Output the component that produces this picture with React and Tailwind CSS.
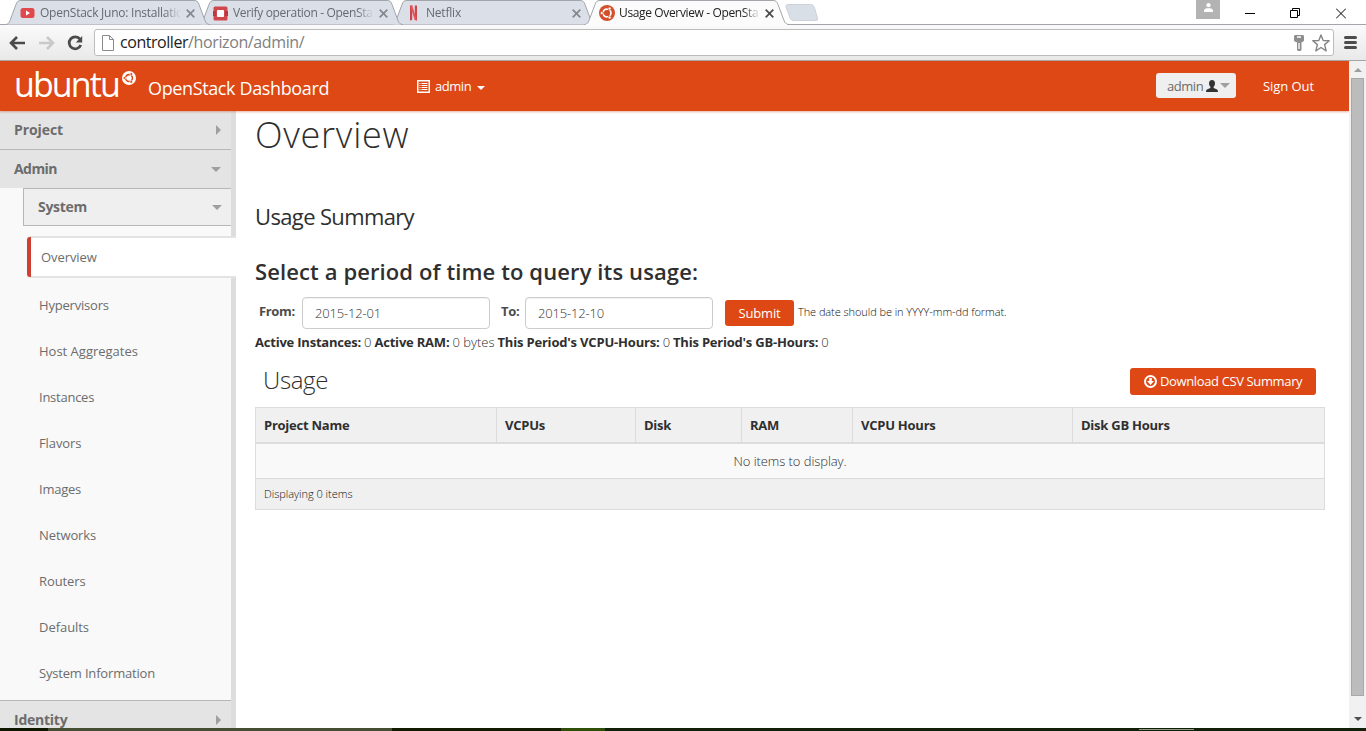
const tabShape = 'M2.5 24.5 C5 24.5 6 23 7 20.5 L13 4.5 C14 1.8 15 0.5 18 0.5 L191 0.5 C194 0.5 195 1.8 196 4.5 L202 20.5 C203 23 204 24.5 207 24.5';

function CloseX({ active }) {
  return (
    <svg className="h-[9px] w-[9px] shrink-0" viewBox="0 0 9 9" stroke={active ? '#4a4a4a' : '#85888c'} strokeWidth="1.7">
      <path d="M0.7 0.7 8.3 8.3M8.3 0.7 0.7 8.3" />
    </svg>
  );
}

function Tab({ icon, active, layer, track, children }) {
  return (
    <div className={`relative -mr-[16px] h-[25px] w-[209px] shrink-0 ${layer}`}>
      <svg className="absolute inset-0 h-[25px] w-[209px]" viewBox="0 0 209 25">
        <path d={tabShape} fill={active ? '#fbfbfb' : '#dbe0e8'} stroke="#a2a5aa" />
        {active && <path d="M4 24.5H205" stroke="#fbfbfb" />}
      </svg>
      <div className="relative flex h-full items-center pl-[16px] pt-px">
        <div className="flex w-[16px] justify-center">{icon}</div>
        <div className={`ml-[5px] w-[141px] overflow-hidden whitespace-nowrap text-[12px] leading-[18px] ${track} ${active ? 'text-[#222]' : 'text-[#666a6f]'} [mask-image:linear-gradient(to_right,black_88%,transparent)]`}>
          {children}
        </div>
        <div className="ml-[5px]"><CloseX active={active} /></div>
      </div>
    </div>
  );
}

function Youtube() {
  return (
    <svg className="h-[16px] w-[15px]" viewBox="0 0 15 16">
      <rect x="0.5" y="3" width="14" height="10" rx="2.5" fill="#e04a4c" />
      <path d="M6 5.5v5l4-2.5z" fill="#fff" />
    </svg>
  );
}

function OpenstackIcon() {
  return (
    <svg className="h-[15px] w-[15px]" viewBox="0 0 15 15">
      <rect x="0.5" y="0.5" width="14" height="14" rx="1.5" fill="#d0484c" />
      <rect x="0" y="5" width="3" height="5" fill="#b83a3f" />
      <rect x="12" y="5" width="3" height="5" fill="#b83a3f" />
      <rect x="4" y="4" width="7" height="7" rx="0.8" fill="#fff" />
    </svg>
  );
}

function NetflixIcon() {
  return (
    <svg className="h-[16px] w-[9px]" viewBox="0 0 9 16">
      <path d="M1 0.5h2.2v14.6L1 15.5z M5.8 0.5H8v15l-2.2-0.4z" fill="#c9484c" />
      <path d="M1 0.5h2.3L8 15.5l-2.3-0.4z" fill="#e8555a" />
    </svg>
  );
}

function Circle({ bg, fg, size }) {
  return (
    <svg className={size} viewBox="0 0 32 32">
      <circle cx="16" cy="16" r="16" fill={bg} />
      <circle cx="16" cy="16" r="7.8" fill="none" stroke={fg} strokeWidth="3.6" />
      <g stroke={bg} strokeWidth="1.6">
        <path d="M16 16H4M16 16l6 10.4M16 16l6-10.4" />
      </g>
      <circle cx="16" cy="16" r="5.4" fill={bg} />
      <g fill={fg} stroke={bg} strokeWidth="1.4">
        <circle cx="5.6" cy="16" r="3.1" />
        <circle cx="21.2" cy="7" r="3.1" />
        <circle cx="21.2" cy="25" r="3.1" />
      </g>
    </svg>
  );
}

function Browser() {
  return (
    <>
      <div className="flex h-[25px] items-start bg-white shadow-[inset_0_-1px_0_#a2a5aa]">
        <div className="flex pl-[3px]">
          <Tab layer="z-[4]" icon={<Youtube />} track="tracking-[-0.24px]">OpenStack Juno: Installatic</Tab>
          <Tab layer="z-[3]" icon={<OpenstackIcon />} track="tracking-[-0.33px]">Verify operation - OpenSta</Tab>
          <Tab layer="z-[2]" icon={<NetflixIcon />} track="tracking-[-0.2px]">Netflix</Tab>
          <Tab active layer="z-[5]" icon={<Circle bg="#d3502a" fg="#fff" size="ml-px h-[16px] w-[16px] shrink-0" />} track="tracking-[-0.36px]">Usage Overview - OpenSta</Tab>
        </div>
        <svg className="ml-[10px] mt-[4px] h-[18px] w-[34px]" viewBox="0 0 34 18">
          <path d="M3 0.5H25.5C28 0.5 28.5 1.5 29.5 4L32.3 13.5C33 16 32.2 16.5 30.5 16.5H9C6.5 16.5 5.5 15.5 4.7 13L1.2 3.5C0.5 1.5 1.2 0.5 3 0.5Z" fill="#d9dfe7" stroke="#cdd2d9" />
        </svg>
        <div className="ml-auto flex h-full items-start">
          <div className="flex h-[19px] w-[24px] justify-center bg-[#b3b3b3] pt-[3px]">
            <svg className="h-[9px] w-[9px]" viewBox="0 0 9 9" fill="#fff"><circle cx="4.5" cy="2.2" r="2.1" /><path d="M0 9V7.6C0 5.8 2 5.2 4.5 5.2S9 5.8 9 7.6V9z" /></svg>
          </div>
          <svg className="ml-[25px] mt-[8px] h-[11px] w-[10px]" viewBox="0 0 10 11"><path d="M0 5.5H10" stroke="#000" /></svg>
          <svg className="ml-[35px] mt-[8px] h-[11px] w-[10px]" viewBox="0 0 10 11" fill="none" stroke="#000"><path d="M0.5 2.5H7.5V9.5H0.5ZM2.5 2.5V0.5H9.5V7.5H7.5" /></svg>
          <svg className="ml-[36px] mr-[20px] mt-[8px] h-[11px] w-[10px]" viewBox="0 0 10 11" stroke="#000"><path d="M0 0.5 10 10.5M10 0.5 0 10.5" /></svg>
        </div>
      </div>
      <div className="flex h-[36px] items-center border-b border-[#a5a5a5] bg-gradient-to-b from-[#fafafa] to-[#e9e9e9] pl-[9px]">
        <svg className="h-[14px] w-[16px]" viewBox="0 0 16 14" fill="none" stroke="#4b4b4b" strokeWidth="2.6"><path d="M16 7H2.5M8 1 2 7l6 6" /></svg>
        <svg className="ml-[14px] h-[14px] w-[16px]" viewBox="0 0 16 14" fill="none" stroke="#c9c9c9" strokeWidth="2.6"><path d="M0 7H13.5M8 1l6 6-6 6" /></svg>
        <svg className="ml-[12px] h-[16px] w-[16px]" viewBox="0 0 16 16" fill="none"><path d="M13 4.2A6 6 0 1 0 13.8 10" stroke="#4b4b4b" strokeWidth="2.8" /><path d="M15.2 1V7.4H8.8z" fill="#4b4b4b" /></svg>
        <div className="ml-[11px] flex h-[27px] w-[1240px] items-center rounded-[3px] border border-[#bcbcbc] bg-white pl-[7px] pr-[3px]">
          <svg className="h-[16px] w-[12px]" viewBox="0 0 12 16" fill="#fff" stroke="#8a8a8a"><path d="M0.5 0.5H7.5L11.5 4.5V15.5H0.5ZM7.5 0.5V4.5H11.5" /></svg>
          <div className="-mt-px ml-[6px] text-[16px] leading-[22px]"><span className="tracking-[-0.45px] text-[#1c1c1c]">controller</span><span className="tracking-[-0.38px] text-[#808080]">/horizon/admin/</span></div>
          <svg className="ml-auto h-[16px] w-[10px]" viewBox="0 0 10 16"><path d="M1.5 0h7C9.5 0 10 0.7 10 1.5V5C10 6.5 9 7 7.5 7.3V15L6.5 16H4L3 15V7.3C1 7 0 6.5 0 5V1.5C0 0.7 0.5 0 1.5 0Z" fill="#8e8e8e" /><path d="M3 2H7M5 8V14" stroke="#fff" strokeWidth="1.3" /></svg>
          <svg className="ml-[8px] h-[18px] w-[18px]" viewBox="0 0 18 18" fill="#fff" stroke="#848484" strokeWidth="1.4" strokeLinejoin="round"><path d="M9 1 11.2 6.5 17.2 6.8 12.6 10.6 14.2 16.8 9 13.5 3.8 16.8 5.4 10.6 0.8 6.8 6.8 6.5Z" /></svg>
        </div>
        <svg className="ml-[10px] h-[13px] w-[13px]" viewBox="0 0 13 13" stroke="#4d4d4d" strokeWidth="3" strokeLinecap="round"><path d="M1.5 1.5H11.5M1.5 6.5H11.5M1.5 11.5H11.5" /></svg>
      </div>
    </>
  );
}

function Down({ className }) {
  return <svg className={`h-[5px] w-[10px] ${className}`} viewBox="0 0 10 5"><path d="M0 0H10L5 5Z" fill="#9f9f9f" /></svg>;
}
function Right() {
  return <svg className="mr-[10px] h-[10px] w-[5px]" viewBox="0 0 5 10"><path d="M0 0V10L5 5Z" fill="#9f9f9f" /></svg>;
}

function Header() {
  return (
    <header className="relative z-10 flex h-[50px] shrink-0 items-center bg-[#dd4814] text-white shadow-[0_1px_2px_rgba(200,80,40,0.45)]">
      <div className="flex w-[417px] items-center pl-[14px]">
        <span className="-mt-[4px] w-[105px] text-[34px] leading-[46px] tracking-[-1.9px]">ubuntu</span>
        <Circle bg="#fff" fg="#dd4814" size="ml-[3px] -mt-[16px] h-[14px] w-[14px]" />
        <span className="ml-[12px] mt-[3px] text-[18px] leading-[26px] tracking-[-0.37px]">OpenStack Dashboard</span>
      </div>
      <div className="flex items-center">
        <svg className="h-[13px] w-[13px]" viewBox="0 0 13 13" fill="none" stroke="#fff"><rect x="0.75" y="0.75" width="11.5" height="11.5" strokeWidth="1.5" /><path d="M2.5 3.5h1M4.5 3.5h6M2.5 5.5h1M4.5 5.5h6M2.5 7.5h1M4.5 7.5h6M2.5 9.5h1M4.5 9.5h6" /></svg>
        <span className="ml-[5px] text-[13px] leading-[18px] tracking-[-0.45px]">admin</span>
        <svg className="ml-[6px] mt-[3px] h-[4px] w-[8px]" viewBox="0 0 8 4"><path d="M0 0H8L4 4Z" fill="#fff" /></svg>
      </div>
      <div className="-mt-px ml-auto flex h-[25px] w-[80px] items-center rounded-[3px] bg-[#efefef] pl-[11px]">
        <span className="text-[13px] leading-[18px] tracking-[-0.45px] text-[#6b6b6b]">admin</span>
        <svg className="ml-[3px] h-[12px] w-[12px]" viewBox="0 0 12 12" fill="#333"><path d="M6 0C8 0 9 1.4 9 3.3C9 5 8.3 6.2 7.5 7C7.5 8 8 8.3 9.5 8.8C11 9.3 12 9.8 12 12H0C0 9.8 1 9.3 2.5 8.8C4 8.3 4.5 8 4.5 7C3.7 6.2 3 5 3 3.3C3 1.4 4 0 6 0Z" /></svg>
        <Down className="ml-[2px]" />
      </div>
      <span className="ml-[27px] w-[86px] text-[13px] leading-[18px] tracking-[-0.07px]">Sign Out</span>
    </header>
  );
}

const items = [
  ['Hypervisors', 'tracking-[-0.2px]'],
  ['Host Aggregates', 'tracking-[0px]'],
  ['Instances', 'tracking-[-0.25px]'],
  ['Flavors', 'tracking-[-0.1px]'],
  ['Images', 'tracking-[-0.25px]'],
  ['Networks', 'tracking-[-0.1px]'],
  ['Routers', 'tracking-[-0.1px]'],
  ['Defaults', 'tracking-[-0.05px]'],
  ['System Information', 'tracking-[-0.18px]'],
];

function Sidebar() {
  return (
    <aside className="flex w-[236px] shrink-0 flex-col bg-[linear-gradient(to_right,#f9f9f9_231px,#dddddd_231px)] text-[#6c6c6c]">
      <div className="mr-[5px] flex h-[39px] shrink-0 items-center justify-between border-b border-[#b4b8b9] bg-[#e4e4e4] pl-[14px] text-[14px] font-bold tracking-[-0.09px]"><span className="-mt-[2px]">Project</span><Right /></div>
      <div className="mr-[5px] flex h-[38px] shrink-0 items-center justify-between bg-[#e4e4e4] pl-[14px] text-[14px] font-bold tracking-[-0.55px]"><span className="-mt-[2px]">Admin</span><Down className="mr-[10px]" /></div>
      <div className="ml-[23px] mr-[5px] flex h-[38px] shrink-0 items-center justify-between border-y border-l border-[#b4b8b9] bg-[#efefef] pl-[14px] text-[14px] font-bold tracking-[-0.32px]"><span className="-mt-[2px]">System</span><Down className="mr-[9px]" /></div>
      <div className="ml-[27px] mt-[10px] flex h-[42px] shrink-0 items-center rounded-l-[3px] border-y-2 border-[#e3e3e3] bg-white">
        <div className="h-[40px] w-[4px] shrink-0 rounded-l-[3px] bg-[#cf4034]" />
        <span className="pl-[10px] text-[13px] leading-[18px] tracking-[-0.07px]">Overview</span>
      </div>
      <div className="flex shrink-0 flex-col pt-[5px]">
        {items.map(([t, k]) => (
          <div key={t} className={`flex h-[46px] items-center pl-[39px] text-[13px] ${k}`}>{t}</div>
        ))}
      </div>
      <div className="mr-[5px] mt-[3px] flex h-[39px] shrink-0 items-center justify-between border-t border-[#b4b8b9] bg-[#e4e4e4] pl-[14px] text-[14px] font-bold tracking-[-0.25px]"><span className="-mt-[2px]">Identity</span><Right /></div>
    </aside>
  );
}

const input = 'flex h-[32px] w-[188px] items-center rounded-[4px] border border-[#ccc] pl-[12px] pt-px text-[13px] font-light tracking-[-0.17px] text-[#333] shadow-[inset_0_1px_1px_rgba(0,0,0,0.06)]';

function Content() {
  return (
    <main className="flex-1 bg-white pl-[19px] text-[#2f2f2f]">
      <h1 className="h-[86px] whitespace-nowrap text-[36px] font-light leading-[47px] tracking-[0.75px]">Overview</h1>
      <h2 className="h-[54px] text-[22px] leading-[38px] tracking-[-0.64px]">Usage Summary</h2>
      <h3 className="h-[46px] whitespace-nowrap text-[22px] font-semibold leading-[40px] tracking-[0.11px]">Select a period of time to query its usage:</h3>
      <div className="flex h-[32px] items-center">
        <label className="w-[47px] pb-[2px] pl-[4px] text-[13px] font-bold tracking-[-0.35px] text-[#4c4c4c]">From:</label>
        <div className={input}>2015-12-01</div>
        <label className="w-[35px] pb-[2px] pl-[11px] text-[13px] font-bold tracking-[-0.3px] text-[#4c4c4c]">To:</label>
        <div className={input}>2015-12-10</div>
        <button className="ml-[12px] h-[26px] w-[69px] rounded-[3px] bg-[#dd4814] text-[13px] leading-[26px] tracking-[-0.17px] text-white">Submit</button>
        <span className="ml-[4px] pb-[2px] text-[11px] font-light tracking-[-0.07px] text-[#111]">The date should be in YYYY-mm-dd format.</span>
      </div>
      <div className="flex h-[25px] items-center gap-[3px] whitespace-pre pt-[2px] text-[13px] font-light">
        <b className="font-bold tracking-[-0.21px]">Active Instances:</b><span>0</span>
        <b className="font-bold tracking-[-0.21px]">Active RAM:</b><span>0 bytes</span>
        <b className="font-bold tracking-[-0.18px]">This Period's VCPU-Hours:</b><span>0</span>
        <b className="font-bold tracking-[-0.21px]">This Period's GB-Hours:</b><span>0</span>
      </div>
      <div className="flex h-[53px] w-[1070px] items-center justify-between pl-[8px] pr-[9px]">
        <h3 className="-mt-[2px] text-[24px] font-light leading-[30px] tracking-[-0.36px]">Usage</h3>
        <button className="mt-[2px] flex h-[27px] w-[186px] items-center rounded-[3px] bg-[#dd4814] pb-px pl-[14px] text-white">
          <svg className="h-[13px] w-[13px]" viewBox="0 0 13 13"><circle cx="6.5" cy="6.5" r="5.5" fill="none" stroke="#fff" strokeWidth="2" /><path d="M5.2 3H7.8V6H10L6.5 10 3 6H5.2Z" fill="#fff" /></svg>
          <span className="ml-[3px] whitespace-nowrap text-[13px] leading-[18px] tracking-[-0.37px]">Download CSV Summary</span>
        </button>
      </div>
      <div className="w-[1070px] border border-[#dcdcdc]">
        <div className="grid h-[36px] grid-cols-[241px_139px_106px_111px_220px_1fr] border-b-2 border-[#dcdcdc] bg-[#f0f0f0] text-[13px] font-bold tracking-[-0.25px]">
          {['Project Name', 'VCPUs', 'Disk', 'RAM', 'VCPU Hours', 'Disk GB Hours'].map((h) => (
            <div key={h} className="flex items-center border-r border-[#dcdcdc] pl-[8px] pt-px last:border-r-0">{h}</div>
          ))}
        </div>
        <div className="flex h-[34px] items-center justify-center bg-[#f9f9f9] pt-[2px] text-[13px] font-light tracking-[-0.07px]">No items to display.</div>
        <div className="flex h-[31px] items-center border-t border-[#dcdcdc] bg-[#f0f0f0] pl-[8px] text-[11px] font-light tracking-[-0.03px] text-[#111]">Displaying 0 items</div>
      </div>
    </main>
  );
}

export default function App() {
  return (
    <div className="flex h-[731px] w-[1366px] flex-col overflow-hidden bg-white font-['Open_Sans',sans-serif]">
      <Browser />
      <div className="flex h-[667px]">
        <div className="flex w-[1349px] flex-col overflow-hidden">
          <Header />
          <div className="flex min-h-0 flex-1"><Sidebar /><Content /></div>
        </div>
        <div className="flex w-[17px] flex-col items-center bg-[#f1f1f1]">
          <svg className="mt-[7px] h-[4px] w-[8px]" viewBox="0 0 8 4"><path d="M0 4H8L4 0Z" fill="#9c9c9c" /></svg>
          <div className="mt-[6px] h-[618px] w-[13px] border border-[#a8a8a8] bg-[#bcbcbc]" />
          <svg className="mt-[21px] h-[4px] w-[8px]" viewBox="0 0 8 4"><path d="M0 0H8L4 4Z" fill="#4f4f4f" /></svg>
        </div>
      </div>
      <div className="flex h-[3px] bg-[#12200a]">
        <div className="w-[48px] bg-[#0f1600]" />
        <div className="w-[344px] bg-[#454e33]" />
        <div className="w-[169px] bg-[#141a02]" />
        <div className="w-[44px] bg-[#2f4f08]" />
        <div className="mt-px ml-[534px] h-px w-[55px] bg-[#8b9a84]" />
      </div>
    </div>
  );
}
